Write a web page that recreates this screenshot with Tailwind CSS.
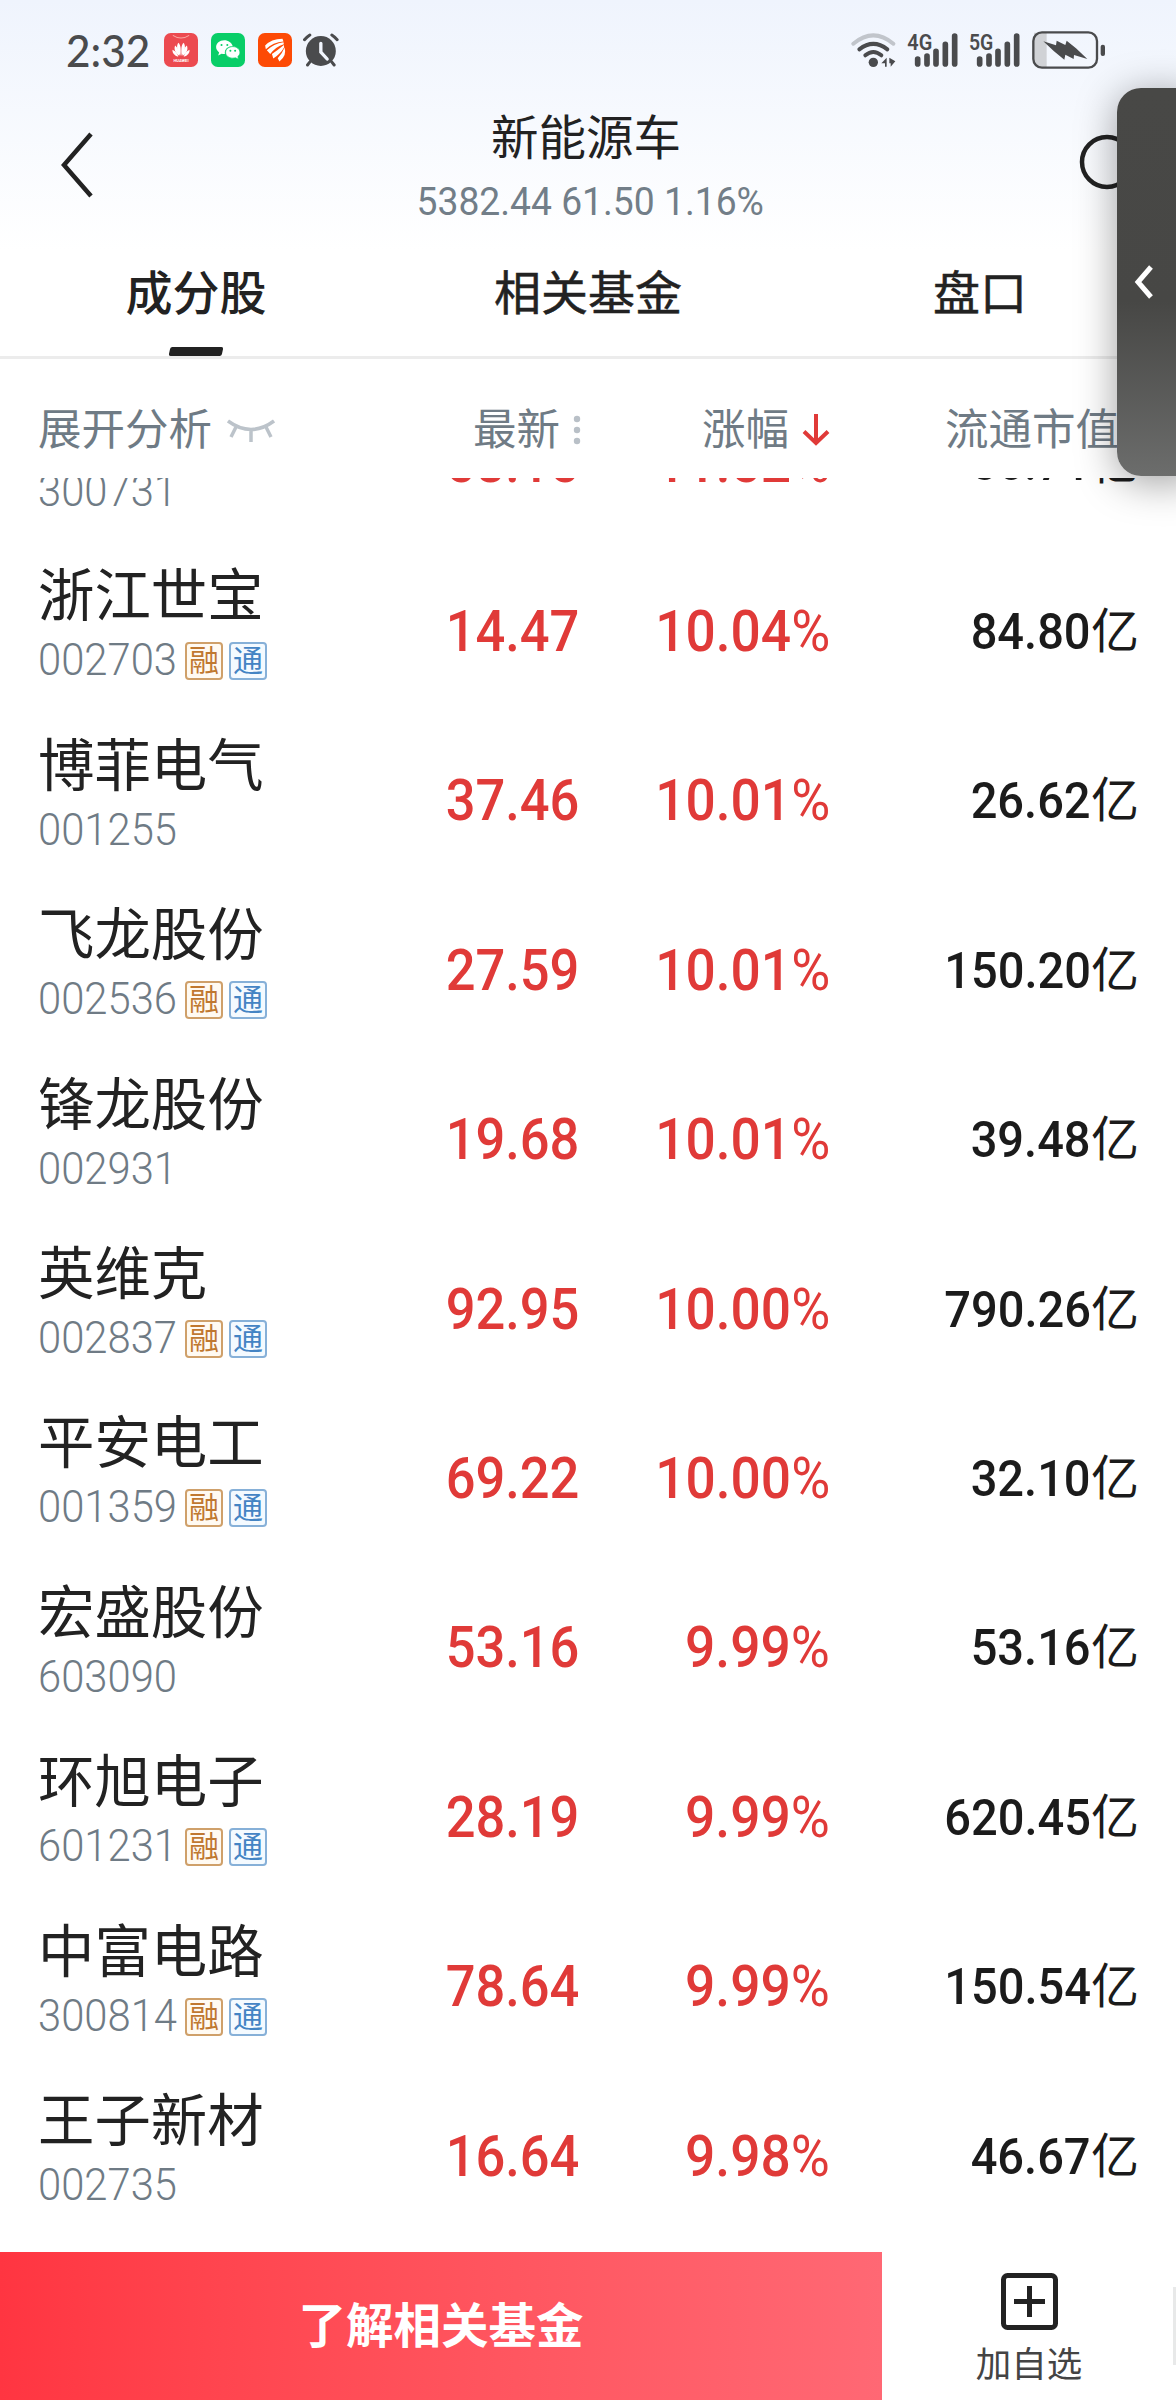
<!DOCTYPE html>
<html lang="zh-CN">
<head>
<meta charset="utf-8">
<title>新能源车</title>
<script src="https://cdn.jsdelivr.net/npm/@tailwindcss/browser@4"></script>
</head>
<body class="bg-white">
<div class="relative flex h-[2400px] w-[1176px] flex-col overflow-hidden bg-white font-['Roboto','Noto_Sans_CJK_SC',sans-serif] text-[#222]">

  <div class="h-[250px] shrink-0 bg-linear-to-b from-[#eff4fd] to-white">
    <!-- Status bar -->
    <div class="flex h-[100px] items-center justify-between pl-[66px] pr-[71px] text-[#4a4b4d]">
      <div class="flex items-center">
        <span class="w-[98px] font-['Lato',sans-serif] text-[45px] leading-[50px] font-medium"><span class="inline-block origin-left scale-x-[.94]">2:32</span></span>
        <svg class="h-[34px] w-[34px]" viewBox="0 0 100 100"><rect width="100" height="100" rx="20" fill="#ec4a50"/><path d="M26 7q24 16 48 0" fill="none" stroke="#f9a9a5" stroke-width="3"/><g fill="#fff"><path d="M48 67C38 56 35 36 43 29C50 37 50 54 48 67Z"/><path d="M45 68C33 59 28 47 33 37C41 43 45 56 45 68Z"/><path d="M42 70C30 66 24 58 25 49C34 53 40 60 42 70Z"/><path d="M52 67C62 56 65 36 57 29C50 37 50 54 52 67Z"/><path d="M55 68C67 59 72 47 67 37C59 43 55 56 55 68Z"/><path d="M58 70C70 66 76 58 75 49C66 53 60 60 58 70Z"/></g><text x="50" y="85" text-anchor="middle" font-family="Roboto" font-weight="700" font-size="12" fill="#fff">HUAWEI</text></svg>
        <svg class="ml-[13px] h-[34px] w-[34px]" viewBox="0 0 100 100"><rect width="100" height="100" rx="20" fill="#08ce68"/><path d="M39 21C25 21 15 30 15 41c0 7 4 12 9 16l-3 9 10-5c3 1 6 1 10 1-2-14 8-23 23-23C61 28 51 21 39 21Z" fill="#fff"/><path d="M64 40c-12 0-21 8-21 17s9 17 21 17c3 0 6-1 8-1l9 4-2-8c4-3 6-7 6-12 0-9-9-17-21-17Z" fill="#fff" stroke="#08ce68" stroke-width="2"/><g fill="#08ce68"><circle cx="31" cy="35" r="3"/><circle cx="48" cy="35" r="3"/><circle cx="57" cy="52" r="3"/><circle cx="71" cy="52" r="3"/></g></svg>
        <svg class="ml-[13px] h-[34px] w-[34px]" viewBox="0 0 100 100"><rect width="100" height="100" rx="20" fill="#fd4a05"/><g fill="#fff"><path d="M21 37Q38 18 72 17L75 25Q44 27 23 48Z"/><path d="M26 51Q46 31 75 27L76 33Q52 40 36 62Z"/><path d="M41 62Q58 50 76 35L77 42Q66 62 45 75Z"/><path d="M58 74Q72 60 78 43Q86 66 63 84Z"/></g></svg>
        <svg class="ml-[11px] h-[34px] w-[36px]" viewBox="787 67 107 102" fill="none" stroke="#4a4b4d" stroke-linecap="round"><circle cx="840" cy="121" r="45" fill="#4a4b4d" stroke="none"/><path d="M791 87Q799 78 807 73M889 87Q881 78 873 73M808 153L800 163M872 153L880 163" stroke-width="9"/><path d="M840 98V124L859 145" stroke="#f1f5fd" stroke-width="10"/></svg>
      </div>
      <div class="flex items-center">
        <svg class="h-[36px] w-[45px]" viewBox="35 64 135 108" fill="none" stroke="#4a4b4d" stroke-width="12" stroke-linecap="round"><path d="M42 99Q102 49 162 99" stroke="#c1c5cb"/><path d="M60 116Q102 83 144 116M78 134Q102 114 126 134"/><circle cx="102" cy="155" r="14" fill="#4a4b4d" stroke="none"/><path d="M126 158L142 141V168H137V158ZM150 141L168 152L154 168V158H150Z" fill="#4a4b4d" stroke="none"/></svg>
        <svg class="ml-[11px] h-[36px] w-[51px] overflow-visible" viewBox="202 64 153 108" fill="none" stroke="#4a4b4d" stroke-width="17" stroke-linecap="round"><text x="203" y="118" textLength="75" lengthAdjust="spacingAndGlyphs" font-family="Roboto" font-weight="600" font-size="66" fill="#4a4b4d" stroke="none">4G</text><path d="M234 145V160M262 136V160M289 122V160M317 101V160M345 76V160"/></svg>
        <svg class="ml-[11px] h-[36px] w-[51px] overflow-visible" viewBox="388 64 153 108" fill="none" stroke="#4a4b4d" stroke-width="17" stroke-linecap="round"><text x="388" y="118" textLength="73" lengthAdjust="spacingAndGlyphs" font-family="Roboto" font-weight="600" font-size="66" fill="#4a4b4d" stroke="none">5G</text><path d="M420 145V160M448 136V160M475 122V160M503 101V160M531 76V160"/></svg>
        <svg class="ml-[12px] h-[38px] w-[73px]" viewBox="576 61 219 114"><path d="M582 66H620V170H600Q582 170 582 150Z" fill="#d0d2d6"/><rect x="580" y="65" width="191" height="106" rx="26" fill="none" stroke="#4a4b4d" stroke-width="7"/><path d="M610 92L648 104L650 90L676 103L680 90L708 113L742 145L702 133L701 145L676 132L673 147L642 122Z" fill="#4a4b4d"/><rect x="782" y="102" width="13" height="34" rx="6" fill="#4a4b4d"/></svg>
      </div>
    </div>

    <!-- Title -->
    <div class="flex h-[130px] items-start justify-between pl-[60px] pr-[40px]">
      <svg class="mt-[32px] h-[66px] w-[34px]" viewBox="0 0 34 66" fill="none" stroke="#222" stroke-width="4.5"><path d="M31 2L4 33L31 64"/></svg>
      <div class="flex flex-col items-center">
        <h1 class="mt-[9px] text-[47.5px] leading-[60px]">新能源车</h1>
        <p class="mt-[9px] w-[346px] text-center text-[38px] leading-[48px] whitespace-nowrap text-[#727e88]"><span class="inline-block scale-x-[.98]">5382.44 61.50 1.16%</span></p>
      </div>
      <svg class="mt-[34px] h-[62px] w-[58px]" viewBox="0 0 58 62" fill="none" stroke="#222" stroke-width="4.5"><circle cx="29" cy="28" r="25"/><path d="M47 46L57 58"/></svg>
    </div>
  </div>

  <!-- Tabs -->
  <nav class="grid h-[109px] shrink-0 grid-cols-3 border-b-3 border-[#ececec] text-[47px] leading-[60px]">
    <div class="relative text-center font-medium"><div class="mt-[14px]">成分股</div><span class="absolute bottom-0 left-1/2 h-[9px] w-[53px] -translate-x-1/2 -skew-x-12 rounded-[2px] bg-[#222]"></span></div>
    <div class="pt-[14px] text-center [-webkit-text-stroke:0.5px_#222]">相关基金</div>
    <div class="pt-[14px] text-center [-webkit-text-stroke:0.5px_#222]">盘口</div>
  </nav>

  <!-- Column titles -->
  <div class="flex h-[119px] shrink-0 items-center pt-[22px] text-[43.5px] leading-[60px] text-[#6f7b85]">
    <div class="flex w-[400px] items-center pl-[38px]"><span class="mt-[2px]">展开分析</span>
      <svg class="ml-[15px] h-[24px] w-[48px]" viewBox="0 0 48 24" fill="none" stroke="#bcc3ca" stroke-width="3.5"><path d="M1 3Q24 20 47 3M9 9L4 19M24 12V24M39 9L44 19"/></svg>
    </div>
    <div class="flex w-[181px] items-center justify-end"><span class="mt-[2px]">最新</span>
      <svg class="ml-[13px] h-[30px] w-[8px]" viewBox="0 0 8 30" fill="#b9c0c7"><circle cx="4" cy="4" r="3.2"/><circle cx="4" cy="15" r="3.2"/><circle cx="4" cy="26" r="3.2"/></svg>
    </div>
    <div class="flex w-[249px] items-center justify-end"><span class="mt-[2px]">涨幅</span>
      <svg class="ml-[13px] h-[32px] w-[28px]" viewBox="0 0 28 32" fill="none" stroke="#e03a38" stroke-width="4"><path d="M14 0V29M2 17.500L14 29L26 17.500"/></svg>
    </div>
    <div class="flex w-[289px] justify-end whitespace-nowrap"><span class="mt-[2px]">流通市值</span></div>
  </div>

  <!-- Stock list -->
  <main class="h-[1774px] shrink-0 overflow-hidden"><div id="rows" class="-mt-[102.6px]"></div></main>

  <!-- Bottom bar -->
  <footer class="flex h-[148px] shrink-0 bg-white">
    <div class="flex w-[882px] items-center justify-center bg-linear-to-r from-[#ff3541] to-[#ff6874] pt-[4px] text-[47.5px] font-bold text-white">了解相关基金</div>
    <div class="flex flex-1 flex-col items-center pt-[21px] pl-[3px]">
      <svg class="h-[57px] w-[57px]" viewBox="0 0 57 57" fill="none" stroke="#222" stroke-width="5"><rect x="2.500" y="2.500" width="52" height="52" rx="4"/><path d="M28.500 13V44M13 28.500H44"/></svg>
      <span class="mt-[10px] text-[35.5px] leading-[50px] text-[#444]">加自选</span>
    </div>
    <div class="mt-[35px] h-[78px] w-[3px] bg-[#e8e9e9]"></div>
  </footer>

  <!-- Edge drawer handle -->
  <div class="absolute top-[88px] left-[1117px] flex h-[388px] w-[80px] items-center rounded-l-[24px] bg-linear-to-b from-[#484846] via-[#474745] via-55% to-[#6c6d6c] pl-[17px] shadow-[0_6px_40px_rgba(0,0,0,0.38)]">
    <svg class="h-[34px] w-[20px]" viewBox="0 0 20 34" fill="none" stroke="#fff" stroke-width="5"><path d="M17 2L4 17L17 32"/></svg>
  </div>
</div>

<script>
const stocks = [
  ['', '300731', 0, '58.15', '11.52', '56.71'],
  ['浙江世宝', '002703', 1, '14.47', '10.04', '84.80'],
  ['博菲电气', '001255', 0, '37.46', '10.01', '26.62'],
  ['飞龙股份', '002536', 1, '27.59', '10.01', '150.20'],
  ['锋龙股份', '002931', 0, '19.68', '10.01', '39.48'],
  ['英维克', '002837', 1, '92.95', '10.00', '790.26'],
  ['平安电工', '001359', 1, '69.22', '10.00', '32.10'],
  ['宏盛股份', '603090', 0, '53.16', '9.99', '53.16'],
  ['环旭电子', '601231', 1, '28.19', '9.99', '620.45'],
  ['中富电路', '300814', 1, '78.64', '9.99', '150.54'],
  ['王子新材', '002735', 0, '16.64', '9.98', '46.67'],
];
const tags = `<span class="ml-[7px] flex h-[38px] w-[38px] items-center justify-center rounded-[4px] border-2 border-[#cfa06a] bg-[#fffaf2] text-[30px] leading-none text-[#c07830]">融</span><span class="ml-[6px] flex h-[38px] w-[38px] items-center justify-center rounded-[4px] border-2 border-[#86b0d8] bg-[#f4faff] text-[30px] leading-none text-[#4484c4]">通</span>`;
document.getElementById('rows').innerHTML = stocks.map(([name, code, tagged, price, pct, cap]) => `
  <div class="flex h-[169.4px] items-center">
    <div class="w-[330px] pb-[6px] pl-[38px]">
      <div class="h-[60px] text-[56.4px] leading-[56px] whitespace-nowrap">${name}</div>
      <div class="mt-[10px] flex h-[44px] items-center text-[#6f7b85]"><span class="w-[140px]"><span class="inline-block origin-left scale-x-[.96] text-[43.500px] leading-[44px] font-[350]">${code}</span></span>${tagged ? tags : ''}</div>
    </div>
    <div class="w-[249px] pt-[5px] text-right text-[57px] leading-[60px] font-medium text-[#e03a38]"><span class="inline-block origin-right scale-x-[.92]">${price}</span></div>
    <div class="w-[251px] pt-[5px] text-right text-[57px] leading-[60px] font-medium text-[#e03a38]"><span class="inline-block origin-right scale-x-[.935]">${pct}<span class="font-normal">%</span></span></div>
    <div class="flex w-[309px] items-center justify-end pt-[5px] text-[50px] leading-[60px] font-medium text-[#1b1b1b]"><span class="inline-block origin-right scale-x-[.94]">${cap}</span><span class="text-[48px] font-normal">亿</span></div>
  </div>`).join('');
</script>
</body>
</html>
